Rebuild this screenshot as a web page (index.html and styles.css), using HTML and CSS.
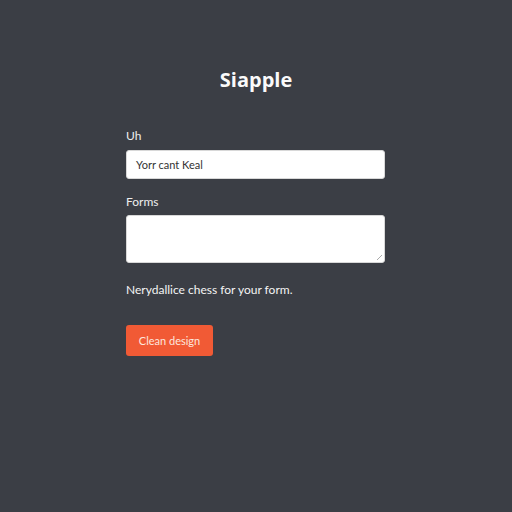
FILE: index.html
```html
<!DOCTYPE html>
<html>
<head>
<meta charset="utf-8">
<link rel="stylesheet" href="styles.css">
</head>
<body>
<main class="page">
  <h1 class="title">Siapple</h1>
  <form class="form">
    <label class="label">Uh</label>
    <div class="input">Yorr cant Keal</div>
    <label class="label label-2">Forms</label>
    <div class="textarea"><span class="grip"></span></div>
    <p class="note">Nerydallice chess for your form.</p>
    <button type="button" class="btn">Clean design</button>
  </form>
</main>
</body>
</html>
```

FILE: styles.css
```css
html, body {
  margin: 0;
  padding: 0;
  background: #3b3e45;
  width: 512px;
  height: 512px;
  overflow: hidden;
}
.page {
  font-family: "Lato", "Liberation Sans", sans-serif;
  color: #f2f2f2;
  padding-top: 66px;
}
.title {
  margin: 0;
  text-align: center;
  font-family: "Open Sans", "Liberation Sans", sans-serif;
  font-size: 20px;
  font-weight: 700;
  line-height: 28px;
  color: #fafafa;
}
.form {
  width: 259px;
  margin: 34px 0 0 126px;
  display: flex;
  flex-direction: column;
}
.label {
  font-size: 12px;
  line-height: 16px;
  color: #eeeeee;
}
.label-2 { margin-top: 15px; }
.input {
  margin-top: 6px;
  height: 29px;
  box-sizing: border-box;
  background: #fff;
  border-radius: 3px;
  border: 1px solid #d8d8d8;
  padding: 0 9px;
  font-size: 11px;
  line-height: 27px;
  color: #333;
}
.textarea {
  margin-top: 5px;
  height: 48px;
  box-sizing: border-box;
  background: #fff;
  border-radius: 3px;
  border: 1px solid #d8d8d8;
  position: relative;
}
.grip {
  position: absolute;
  right: 2px;
  bottom: 2px;
  width: 5px;
  height: 5px;
  background: linear-gradient(135deg, transparent 45%, #aaa 45%, #aaa 55%, transparent 55%);
}
.note {
  margin: 19px 0 0 0;
  font-size: 12px;
  line-height: 16px;
  color: #f4f4f4;
}
.btn {
  margin-top: 27px;
  align-self: flex-start;
  width: 87px;
  height: 31px;
  border: none;
  border-radius: 3px;
  background: #f15a35;
  color: #fde6dd;
  font-family: "Lato", "Liberation Sans", sans-serif;
  font-size: 11px;
  padding: 0;
}
```
